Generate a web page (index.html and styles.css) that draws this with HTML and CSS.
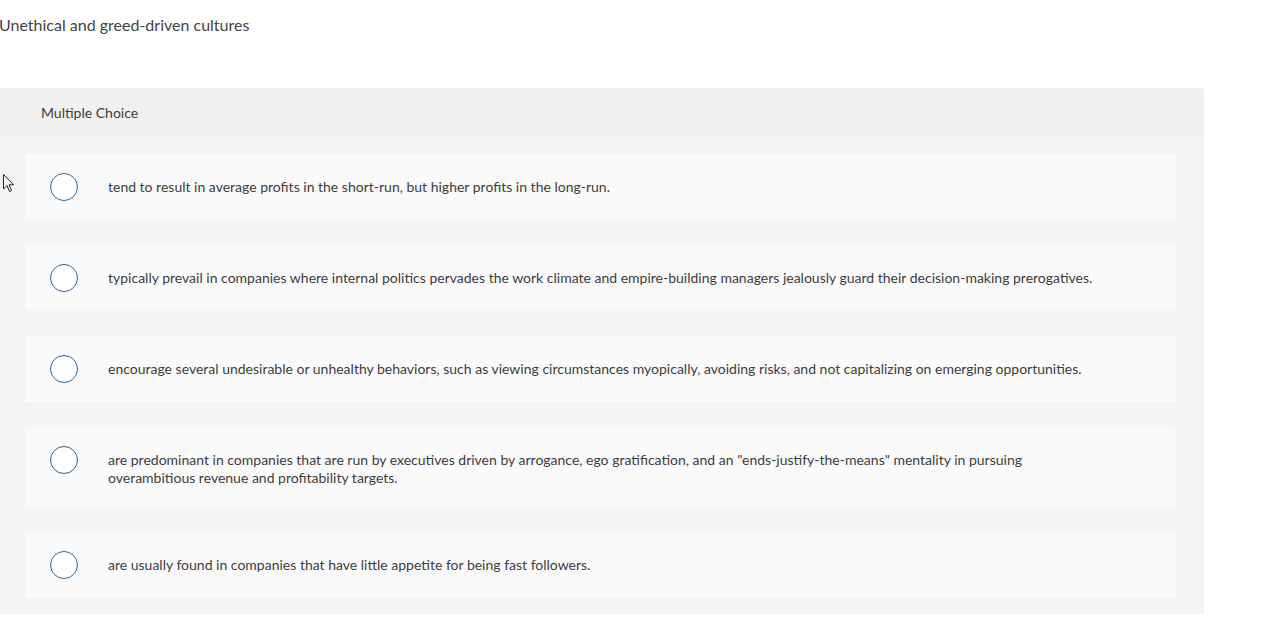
FILE: index.html
```html
<!DOCTYPE html>
<html>
<head>
<meta charset="utf-8">
<link rel="stylesheet" href="styles.css">
</head>
<body>
<div class="page">
  <p class="prompt">Unethical and greed-driven cultures</p>
  <div class="panel">
    <div class="panel-head">Multiple Choice</div>
    <div class="panel-body">
      <div class="option"><span class="radio"></span><span class="label">tend to result in average profits in the short-run, but higher profits in the long-run.</span></div>
      <div class="option"><span class="radio"></span><span class="label">typically prevail in companies where internal politics pervades the work climate and empire-building managers jealously guard their decision-making prerogatives.</span></div>
      <div class="option"><span class="radio"></span><span class="label">encourage several undesirable or unhealthy behaviors, such as viewing circumstances myopically, avoiding risks, and not capitalizing on emerging opportunities.</span></div>
      <div class="option"><span class="radio"></span><span class="label">are predominant in companies that are run by executives driven by arrogance, ego gratification, and an "ends-justify-the-means" mentality in pursuing overambitious revenue and profitability targets.</span></div>
      <div class="option"><span class="radio"></span><span class="label">are usually found in companies that have little appetite for being fast followers.</span></div>
    </div>
  </div>
  <svg class="cursor" width="13" height="20" viewBox="0 0 13 20"><path d="M1.5 1.5 L1.5 16 L5 12.5 L7.5 18.5 L9.5 17.6 L7 11.8 L11.5 11.8 Z" fill="#fff" stroke="#222" stroke-width="1" stroke-linejoin="miter"/></svg>
</div>
</body>
</html>
```
FILE: styles.css
```css
html, body { margin: 0; padding: 0; background: #fff; }
body { font-family: "Lato", "Open Sans", sans-serif; color: #444; }
.page { position: relative; width: 1262px; }
.prompt { margin: 0 0 0 -1px; padding: 15px 0 0 0; height: 88px; box-sizing: border-box; font-size: 16px; line-height: 20px; color: #444; }
.panel { width: 1204px; background: #f4f4f4; border-top-right-radius: 4px; }
.panel-head { height: 49px; background: #f0f0f0; box-sizing: border-box; padding: 16px 0 0 41px; font-size: 14px; line-height: 18px; color: #3d3d3d; border-top-right-radius: 4px; }
.panel-body { padding: 17px 28px 16px 25px; display: flex; flex-direction: column; gap: 25px; }
.option { display: flex; align-items: flex-start; background: #fafafa; border-radius: 3px; padding: 19px 76px 19px 25px; }
.radio { flex: none; box-sizing: border-box; width: 28px; height: 28px; border: 1.5px solid #2f6495; border-radius: 50%; background: #fff; }
.label { margin: 5px 0 1px 30px; font-size: 14px; line-height: 18px; color: #3d3d3d; }
.cursor { position: absolute; left: 2px; top: 173px; }
```
